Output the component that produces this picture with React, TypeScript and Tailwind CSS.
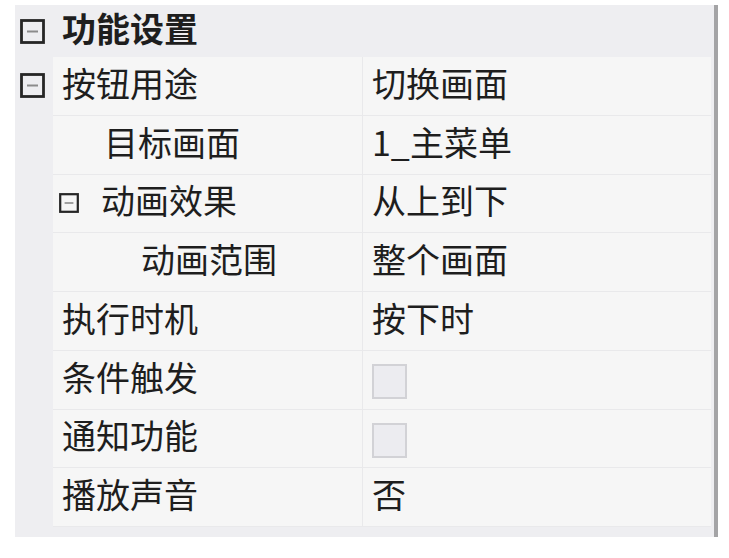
import React from 'react'

interface PropRow {
    label: string
    value?: string
    checkbox?: boolean
    indent: string
    expander?: 'big' | 'small'
}

const rows: PropRow[] = [
    { label: '按钮用途', value: '切换画面', indent: 'pl-[9px]', expander: 'big' },
    { label: '目标画面', value: '1_主菜单', indent: 'pl-[51px]' },
    { label: '动画效果', value: '从上到下', indent: 'pl-[6px]', expander: 'small' },
    { label: '动画范围', value: '整个画面', indent: 'pl-[88px]' },
    { label: '执行时机', value: '按下时', indent: 'pl-[9px]' },
    { label: '条件触发', checkbox: true, indent: 'pl-[9px]' },
    { label: '通知功能', checkbox: true, indent: 'pl-[9px]' },
    { label: '播放声音', value: '否', indent: 'pl-[9px]' },
]

const Expander: React.FC<{ size: 'big' | 'small' }> = ({ size }) => (
    <svg
        viewBox="0 0 25 25"
        className={size === 'big' ? 'w-[25px] h-[25px] shrink-0' : 'w-[20px] h-[20px] shrink-0'}
    >
        <rect x="1.5" y="1.5" width="22" height="22" fill="none" stroke="#262626" strokeWidth="2.8" />
        <line x1="7" y1="12.5" x2="18" y2="12.5" stroke="#8c8c8c" strokeWidth="2" />
    </svg>
)

const App: React.FC = () => {
    return (
        <div
            className="w-[729px] h-[558px] bg-white pt-[5px] pl-[15px]"
            style={{ fontFamily: '"Microsoft YaHei", "Noto Sans CJK SC", sans-serif' }}
        >
            <div className="w-[703px] h-[532px] flex">
                <div className="flex-1 bg-[#eeeef1] flex flex-col">
                    <div className="h-[52px] flex items-center pl-[5px] gap-[17px]">
                        <Expander size="big" />
                        <span className="text-[34px] font-bold text-[#1e1e1e] leading-none mb-[6px]">
                            功能设置
                        </span>
                    </div>
                    {rows.map((row, i) => (
                        <div key={i} className="h-[58.75px] flex">
                            <div className="w-[38px] flex items-center justify-start pl-[5px]">
                                {row.expander === 'big' && (
                                    <div className="mb-[2px]">
                                        <Expander size="big" />
                                    </div>
                                )}
                            </div>
                            <div className="flex-1 flex bg-[#f6f6f6] border-b border-[#e9e9eb] mr-[3px]">
                                <div
                                    className={`w-[310px] flex items-center border-r border-[#e9e9eb] ${row.indent} gap-[22px]`}
                                >
                                    {row.expander === 'small' && <Expander size="small" />}
                                    <span className="text-[34px] text-[#1e1e1e] leading-none mb-[6px]">
                                        {row.label}
                                    </span>
                                </div>
                                <div className="flex-1 flex items-center pl-[9px]">
                                    {row.checkbox ? (
                                        <div className="w-[35px] h-[35px] mt-[4px] border-2 border-[#d2d2d6] bg-[#ececf0]" />
                                    ) : (
                                        <span className="text-[34px] text-[#1e1e1e] leading-none mb-[6px]">
                                            {row.value}
                                        </span>
                                    )}
                                </div>
                            </div>
                        </div>
                    ))}
                </div>
                <div className="w-[4px] bg-[#a4a4a6]" />
            </div>
        </div>
    )
}

export default App
